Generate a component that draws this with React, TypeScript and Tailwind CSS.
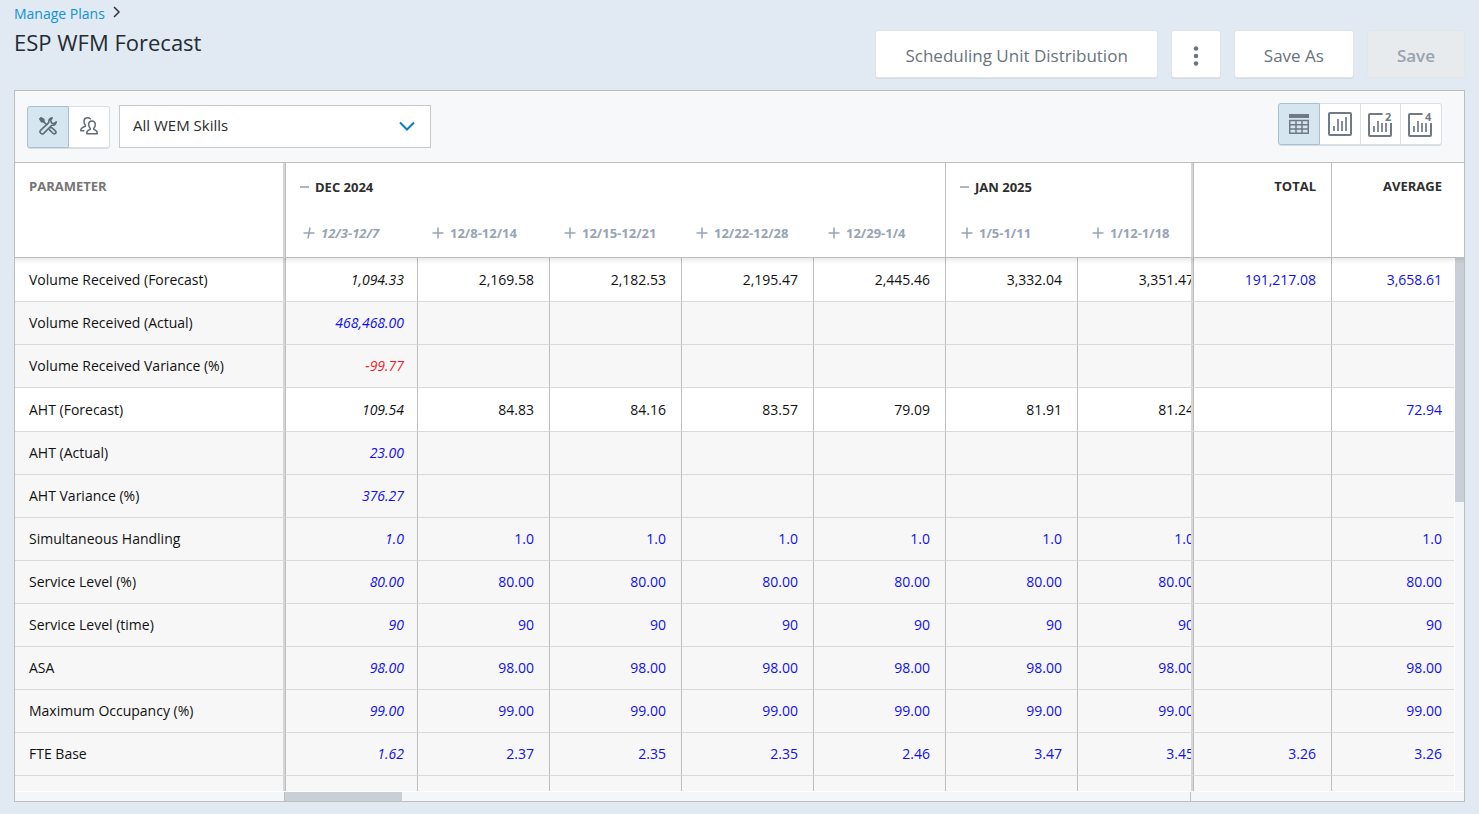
import { Fragment } from "react";

type Tone = "black" | "blue" | "red";

interface Row {
  label: string;
  first: string;
  firstTone?: Tone;
  values: string[];
  total?: string;
  average?: string;
  forecast?: boolean;
}

const months = [
  { name: "DEC 2024", span: 5 },
  { name: "JAN 2025", span: 2 },
];

const weeks = [
  "12/3-12/7",
  "12/8-12/14",
  "12/15-12/21",
  "12/22-12/28",
  "12/29-1/4",
  "1/5-1/11",
  "1/12-1/18",
];

const empty = ["", "", "", "", "", ""];
const same = (value: string) => empty.map(() => value);

const rows: Row[] = [
  {
    label: "Volume Received (Forecast)",
    first: "1,094.33",
    firstTone: "black",
    values: ["2,169.58", "2,182.53", "2,195.47", "2,445.46", "3,332.04", "3,351.47"],
    total: "191,217.08",
    average: "3,658.61",
    forecast: true,
  },
  { label: "Volume Received (Actual)", first: "468,468.00", values: empty },
  { label: "Volume Received Variance (%)", first: "-99.77", firstTone: "red", values: empty },
  {
    label: "AHT (Forecast)",
    first: "109.54",
    firstTone: "black",
    values: ["84.83", "84.16", "83.57", "79.09", "81.91", "81.24"],
    average: "72.94",
    forecast: true,
  },
  { label: "AHT (Actual)", first: "23.00", values: empty },
  { label: "AHT Variance (%)", first: "376.27", values: empty },
  { label: "Simultaneous Handling", first: "1.0", values: same("1.0"), average: "1.0" },
  { label: "Service Level (%)", first: "80.00", values: same("80.00"), average: "80.00" },
  { label: "Service Level (time)", first: "90", values: same("90"), average: "90" },
  { label: "ASA", first: "98.00", values: same("98.00"), average: "98.00" },
  { label: "Maximum Occupancy (%)", first: "99.00", values: same("99.00"), average: "99.00" },
  {
    label: "FTE Base",
    first: "1.62",
    values: ["2.37", "2.35", "2.35", "2.46", "3.47", "3.45"],
    total: "3.26",
    average: "3.26",
  },
  { label: "", first: "", values: empty },
];

const tones: Record<Tone, string> = {
  black: "text-[#111111]",
  blue: "text-[#0f0ff0]",
  red: "text-[#f01e28]",
};

function ToolsIcon() {
  return (
    <svg width="18" height="18" viewBox="0 0 18 18" fill="none" stroke="currentColor" strokeWidth="1.6" strokeLinejoin="round" strokeLinecap="round">
      <path d="M.8 1.900L2 .8l2.800 1.600.3 2.600-2.600-.3z" fill="currentColor" />
      <path d="M4.500 4.500l3.200 3.200" />
      <path d="M13.200.9C10.800 1 9.400 3 9.900 5.300L1.600 13.300a2.200 2.200 0 0 0 3.100 3.100L12.800 8.200c2.300.5 4.300-.9 4.400-3.400L15 6.600l-2.500-.7-.8-2.500z" />
      <path d="M10.300 12.600l3.900 3.900c1.500 1.300 3.600-.8 2.400-2.300l-3.900-3.700-1.300.1" />
    </svg>
  );
}

function PeopleIcon() {
  return (
    <svg width="18" height="18" viewBox="0 0 18 18" fill="none" stroke="currentColor" strokeWidth="1.5" strokeLinejoin="round" strokeLinecap="round">
      <path d="M12 4c-2 0-3.300 1.400-3.300 3.500 0 1.700.6 2.900 1.500 3.700v1.200c-1.900.7-3.400 1.500-3.400 3.400v1h10.400v-1c0-1.900-1.500-2.700-3.400-3.400v-1.200c.9-.8 1.500-2 1.500-3.700C15.300 5.400 14 4 12 4z" />
      <path d="M10.300 1.700C9.700 1.100 8.800.8 7.800.8 5.500.8 4 2.300 4 4.500c0 1.500.5 2.700 1.400 3.500v1.200C2.900 10 .8 10.800.8 13v.8h3" />
    </svg>
  );
}

function GridIcon() {
  return (
    <svg width="20" height="20" viewBox="0 0 20 20" fill="none" stroke="currentColor" strokeWidth="1.500">
      <path d="M0 0h20v4H0z" fill="currentColor" stroke="none" />
      <path d="M.75 6.500h18.500v12.700H.75zM7 6.500v12.700M13 6.500v12.700M.75 10.800h18.500M.75 15h18.500" />
    </svg>
  );
}

function ChartIcon({ count }: { count?: number }) {
  return (
    <svg width="30" height="32" viewBox="-1 -2 30 32" fill="none" stroke="currentColor" strokeWidth="2">
      {count ? (
        <Fragment>
          <path d="M15.500 4H3a1 1 0 0 0-1 1v20a1 1 0 0 0 1 1h20a1 1 0 0 0 1-1V13" />
          <path d="M7 22v-6M11 22V11M15 22v-9M19 22v-9" strokeWidth="1.700" />
          <text x="18" y="11" fontSize="11" fontWeight="700" fill="currentColor" stroke="none">
            {count}
          </text>
        </Fragment>
      ) : (
        <Fragment>
          <rect x="3" y="3" width="22" height="22" rx="1" />
          <path d="M8 21v-5M12 21V9M16 21v-10M20 21V7" strokeWidth="1.700" />
        </Fragment>
      )}
    </svg>
  );
}

function Header() {
  return (
    <header className="flex h-[90px] shrink-0 items-start justify-between">
      <div>
        <nav className="flex items-center gap-2 pt-1 text-sm leading-5 text-[#0f93d2]">
          <a href="#plans">Manage Plans</a>
          <svg width="7" height="12" viewBox="0 0 7 12" fill="none" stroke="#2b333b" strokeWidth="1.500" className="mb-1">
            <path d="M1 1l5 5-5 5" />
          </svg>
        </nav>
        <h1 className="mt-1 text-[22px] leading-7 text-[#232b33]">ESP WFM Forecast</h1>
      </div>
      <div className="flex gap-[13px] pt-[30px] text-[17px] text-[#6a737b]">
        <button className="h-12 rounded-[3px] border border-[#dde4ea] bg-white px-[29px] pt-[3px] shadow-[0_1px_0_#d5dde3]">
          Scheduling Unit Distribution
        </button>
        <button aria-label="More actions" className="flex h-12 w-[50px] items-center justify-center rounded-[3px] border border-[#dde4ea] bg-white pt-[3px] shadow-[0_1px_0_#d5dde3]">
          <svg width="6" height="20" viewBox="0 0 6 20" fill="currentColor">
            <circle cx="3" cy="2.500" r="2.200" />
            <circle cx="3" cy="10" r="2.200" />
            <circle cx="3" cy="17.500" r="2.200" />
          </svg>
        </button>
        <button className="h-12 rounded-[3px] border border-[#dde4ea] bg-white px-[29px] pt-[3px] shadow-[0_1px_0_#d5dde3]">
          Save As
        </button>
        <button disabled className="h-12 rounded-[3px] border border-[#e0e6ea] bg-[#e7ebed] px-[29px] pt-[3px] font-semibold text-[#98a3ad]">
          Save
        </button>
      </div>
    </header>
  );
}

function Toolbar() {
  return (
    <div className="flex h-[72px] shrink-0 items-center justify-between border-b border-[#bdbdbd] bg-[#f6f8fa] pr-[22px] pl-3">
      <div className="flex items-center gap-[9px]">
        <div className="flex rounded-[3px] text-[#5f6b76] shadow-[0_1px_0_#d5dde3]">
          <button aria-label="Skills" className="flex h-[42px] w-[42px] items-center justify-center rounded-l-[3px] border border-[#a9c0d1] bg-[#d6e6f1] pb-[2px]">
            <ToolsIcon />
          </button>
          <button aria-label="Groups" className="flex h-[42px] w-[41px] items-center justify-center rounded-r-[3px] border border-l-0 border-[#d8e0e6] bg-white pb-[2px]">
            <PeopleIcon />
          </button>
        </div>
        <div className="relative">
          <select aria-label="Skill" className="h-[43px] w-[312px] appearance-none border border-[#c8c8c8] bg-white pr-10 pb-[3px] pl-[13px] text-[15px] text-[#2b2b2b]">
            <option>All WEM Skills</option>
          </select>
          <svg width="16" height="10" viewBox="0 0 16 10" fill="none" stroke="#0a7cc0" strokeWidth="2" className="pointer-events-none absolute top-4 right-4">
            <path d="M1 1.500l7 7 7-7" />
          </svg>
        </div>
      </div>
      <div className="mt-3 flex self-start rounded-[3px] text-[#6f7a86] shadow-[0_1px_0_#d5dde3]">
        <button aria-label="Table" className="flex h-[42px] w-[42px] items-center justify-center rounded-l-[3px] border border-[#a9c0d1] bg-[#d6e6f1]">
          <GridIcon />
        </button>
        <button aria-label="One chart" className="flex h-[42px] w-[41px] items-center justify-center border border-l-0 border-[#d8e0e6] bg-white">
          <ChartIcon />
        </button>
        <button aria-label="Two charts" className="flex h-[42px] w-10 items-center justify-center border border-l-0 border-[#d8e0e6] bg-white">
          <ChartIcon count={2} />
        </button>
        <button aria-label="Four charts" className="flex h-[42px] w-[41px] items-center justify-center rounded-r-[3px] border border-l-0 border-[#d8e0e6] bg-white">
          <ChartIcon count={4} />
        </button>
      </div>
    </div>
  );
}

function ForecastTable() {
  return (
    <table className="w-full min-w-[1467px] table-fixed border-separate border-spacing-0 text-sm">
      <colgroup>
        <col className="w-[270px]" />
        {weeks.map((week) => (
          <col key={week} />
        ))}
        <col className="w-[140px]" />
        <col className="w-[133px]" />
      </colgroup>
      <thead className="text-left text-[13px] leading-5 text-[#2e2e2e]">
        <tr className="h-12">
          <th rowSpan={2} className="sticky left-0 z-10 border-r-2 border-b border-r-[#d6d6d6] border-b-[#bdbdbd] bg-white pt-[13px] pl-[14px] align-top text-[#757575]">
            PARAMETER
          </th>
          {months.map((month) => (
            <th key={month.name} colSpan={month.span} className="border-l border-[#bdbdbd] bg-white pl-[14px]">
              <button className="flex items-center gap-[6px] font-bold">
                <span className="h-[2px] w-[9px] bg-[#a9b7bf]" />
                {month.name}
              </button>
            </th>
          ))}
          <th rowSpan={2} className="sticky right-[133px] z-10 border-b border-l-2 border-b-[#bdbdbd] border-l-[#d6d6d6] bg-white pt-[13px] pr-[15px] text-right align-top shadow-[inset_1px_0_0_#bdbdbd]">
            TOTAL
          </th>
          <th rowSpan={2} className="sticky right-0 z-10 border-b border-l border-[#bdbdbd] bg-white pt-[13px] pr-[22px] text-right align-top">
            AVERAGE
          </th>
        </tr>
        <tr className="h-[47px]">
          {weeks.map((week, i) => (
            <th
              key={week}
              className={`border-b border-[#bdbdbd] bg-white pb-[2px] text-[#98a3b5] ${i === 0 || i === 5 ? "border-l" : ""} ${i === 0 ? "pl-[17px] italic" : "pl-[15px]"}`}
            >
              <button className="flex items-center gap-[6px] font-bold">
                <svg width="12" height="12" viewBox="0 0 12 12" stroke="currentColor" strokeWidth="1.500">
                  <path d={i === 0 ? "M0.500 6h11M7 0.500L5 11.500" : "M0.500 6h11M6 0.500v11"} />
                </svg>
                {week}
              </button>
            </th>
          ))}
        </tr>
      </thead>
      <tbody>
        {rows.map((row) => {
          const bg = row.forecast ? "bg-white" : "bg-[#f7f7f7]";
          const tone = row.forecast ? tones.black : tones.blue;
          return (
            <tr key={row.label} className={row.forecast ? "h-11" : "h-[43px]"}>
              <th scope="row" className={`sticky left-0 z-10 border-r-2 border-b border-r-[#d6d6d6] border-b-[#dadada] pl-[14px] text-left font-normal text-[#111111] ${bg}`}>
                {row.label}
              </th>
              <td className={`border-b border-l border-b-[#dadada] border-l-[#bdbdbd] pr-[13px] text-right italic ${bg} ${tones[row.firstTone ?? "blue"]}`}>
                {row.first}
              </td>
              {row.values.map((value, i) => (
                <td key={weeks[i + 1]} className={`border-b border-l border-b-[#dadada] border-l-[#bdbdbd] pr-[15px] text-right ${bg} ${tone}`}>
                  {value}
                </td>
              ))}
              <td className={`sticky right-[133px] z-10 border-b border-l-2 border-b-[#dadada] border-l-[#d6d6d6] pr-[15px] text-right shadow-[inset_1px_0_0_#bdbdbd] ${bg} ${tones.blue}`}>
                {row.total}
              </td>
              <td className={`sticky right-0 z-10 border-b border-l border-b-[#dadada] border-l-[#bdbdbd] pr-[22px] text-right ${bg} ${tones.blue}`}>
                {row.average}
              </td>
            </tr>
          );
        })}
      </tbody>
    </table>
  );
}

export default function App() {
  return (
    <div className="flex h-screen flex-col overflow-hidden bg-[#e1e9f2] px-[14px] pb-3 font-['Open_Sans',sans-serif]">
      <Header />
      <main className="flex min-h-0 flex-1 flex-col border border-[#bdbdbd] bg-white">
        <Toolbar />
        <div className="relative min-h-0 flex-1">
          <div className="h-full overflow-hidden">
            <ForecastTable />
          </div>
          <div className="pointer-events-none absolute inset-x-0 top-[95px] z-20 h-[6px] bg-linear-to-b from-black/8 to-transparent" />
          <div className="absolute top-[95px] right-0 bottom-0 z-10 w-[10px] border-l border-white bg-[#f3f7fa]">
            <div className="h-[244px] bg-[#c8cfd6]" />
          </div>
        </div>
        <div className="flex h-[10px] shrink-0 border-t border-white bg-[#f3f7fa]">
          <div className="w-[270px] border-r border-[#bdbdbd]" />
          <div className="flex-1">
            <div className="h-full w-[117px] bg-[#c8cfd6]" />
          </div>
          <div className="w-[274px] border-l border-[#bdbdbd]" />
        </div>
      </main>
    </div>
  );
}
